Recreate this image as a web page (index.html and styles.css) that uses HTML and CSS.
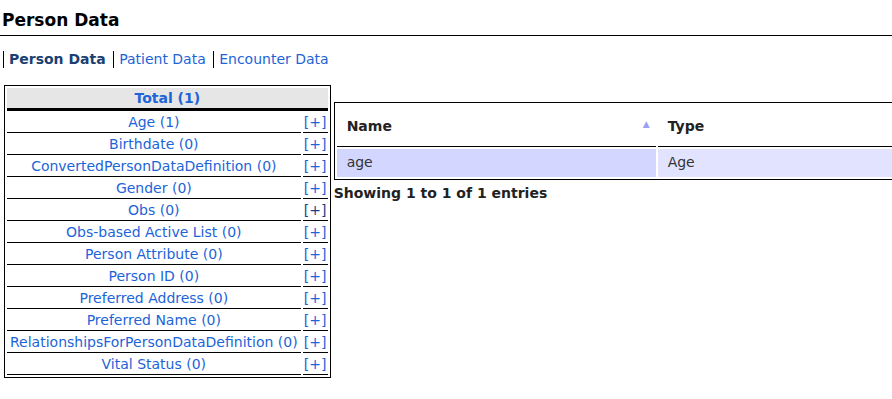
FILE: index.html
```html
<!DOCTYPE html>
<html>
<head>
<meta charset="utf-8">
<title>Person Data</title>
<link rel="stylesheet" href="styles.css">
</head>
<body>
<h2 class="title">Person Data</h2>

<div class="tabs">
	<span class="tab current">Person Data</span>
	<a class="tab" href="#">Patient Data</a>
	<a class="tab" href="#">Encounter Data</a>
</div>

<div class="content">
	<table class="totals">
		<tr>
			<th colspan="2"><a href="#">Total (1)</a></th>
		</tr>
		<tr><td class="lbl"><a href="#">Age (1)</a></td><td class="add"><a href="#">[+]</a></td></tr>
		<tr><td class="lbl"><a href="#">Birthdate (0)</a></td><td class="add"><a href="#">[+]</a></td></tr>
		<tr><td class="lbl"><a href="#">ConvertedPersonDataDefinition (0)</a></td><td class="add"><a href="#">[+]</a></td></tr>
		<tr><td class="lbl"><a href="#">Gender (0)</a></td><td class="add"><a href="#">[+]</a></td></tr>
		<tr><td class="lbl"><a href="#">Obs (0)</a></td><td class="add"><a href="#" class="seen">[+]</a></td></tr>
		<tr><td class="lbl"><a href="#">Obs-based Active List (0)</a></td><td class="add"><a href="#">[+]</a></td></tr>
		<tr><td class="lbl"><a href="#">Person Attribute (0)</a></td><td class="add"><a href="#">[+]</a></td></tr>
		<tr><td class="lbl"><a href="#">Person ID (0)</a></td><td class="add"><a href="#">[+]</a></td></tr>
		<tr><td class="lbl"><a href="#">Preferred Address (0)</a></td><td class="add"><a href="#">[+]</a></td></tr>
		<tr><td class="lbl"><a href="#">Preferred Name (0)</a></td><td class="add"><a href="#">[+]</a></td></tr>
		<tr><td class="lbl"><a href="#">RelationshipsForPersonDataDefinition (0)</a></td><td class="add"><a href="#">[+]</a></td></tr>
		<tr><td class="lbl"><a href="#">Vital Status (0)</a></td><td class="add"><a href="#">[+]</a></td></tr>
	</table>

	<div class="results">
		<div class="wrapper">
			<table class="display">
				<thead>
					<tr>
						<th class="sorted">Name <span class="sort">&#9650;</span></th>
						<th>Type</th>
					</tr>
				</thead>
				<tbody>
					<tr>
						<td class="sorted">age</td>
						<td>Age</td>
					</tr>
				</tbody>
			</table>
		</div>
		<div class="info">Showing 1 to 1 of 1 entries</div>
	</div>
</div>
</body>
</html>
```

FILE: styles.css
```css
body {
  margin: 0;
  font-family: "DejaVu Sans", Verdana, sans-serif;
  font-size: 14px;
  color: #333;
}

a {
  color: #1c64d8;
  text-decoration: none;
}

.title {
  margin: 0;
  padding: 10px 2px 5px;
  font-size: 17px;
  line-height: 20px;
  color: #000;
  border-bottom: 1px solid #000;
}

.tabs {
  padding: 15px 0 0 3px;
  line-height: 17px;
}

.tab {
  display: inline-block;
  padding: 0 3px 0 5px;
  border-left: 1px solid #000;
}

.tab.current {
  font-weight: bold;
  color: #1a3f72;
}

.content {
  display: flex;
  align-items: flex-start;
  padding: 17px 0 0 4px;
  gap: 3px;
}

/* left totals box */
.totals {
  border: 1px solid #000;
  border-spacing: 2px;
  flex: none;
}

.totals th {
  background-color: #e6e6e6;
  border-bottom: 3px solid #000;
  height: 20px;
  padding: 0;
  text-align: center;
  line-height: 17px;
}

.totals td {
  height: 19px;
  padding: 0;
  border-bottom: 1px solid #000;
  white-space: nowrap;
  line-height: 17px;
}

.totals .lbl {
  text-align: center;
  padding: 0 3px;
}

.totals .add {
  text-align: center;
  width: 25px;
}

.totals .seen {
  color: #1c3f86;
}

/* right results */
.results {
  flex: 1;
  min-width: 0;
  overflow: hidden;
  padding-top: 17px;
}

.wrapper {
  border: 1px solid #000;
  border-right: none;
  width: 900px;
}

.display {
  width: 100%;
  border-spacing: 2px;
}

.display th {
  text-align: left;
  font-weight: bold;
  color: #222;
  line-height: 17px;
  padding: 13px 10px 11px;
  border-bottom: 1px solid #000;
  position: relative;
}

.display th:first-child {
  width: 299px;
}

.sort {
  position: absolute;
  right: 6px;
  top: 11px;
  font-size: 9px;
  color: #9b9ef5;
}

.display td {
  line-height: 17px;
  padding: 5px 10px 6px;
  background-color: #e2e4ff;
}

.display td.sorted {
  background-color: #d3d6ff;
}

.info {
  font-weight: bold;
  line-height: 17px;
  padding-top: 5px;
  color: #222;
}
```
